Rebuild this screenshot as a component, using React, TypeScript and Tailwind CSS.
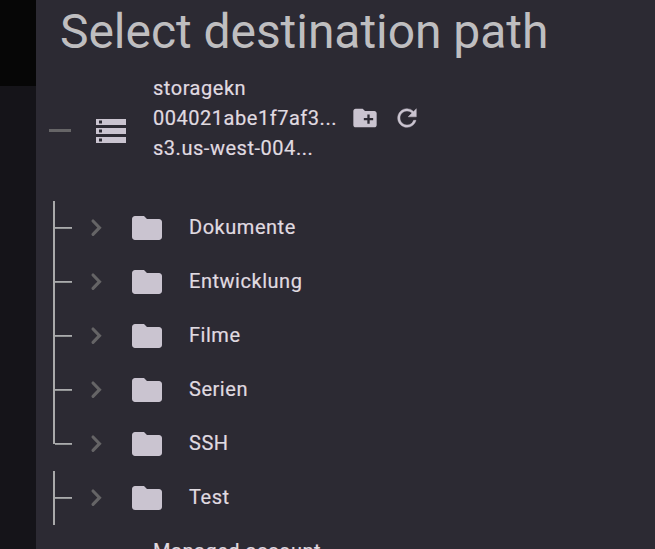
import { MdCreateNewFolder, MdFolder, MdStorage } from 'react-icons/md'

const folders = [
  { name: 'Dokumente', last: false },
  { name: 'Entwicklung', last: false },
  { name: 'Filme', last: false },
  { name: 'Serien', last: false },
  { name: 'SSH', last: true },
  { name: 'Test', last: false },
]

const label = 'text-[20px] leading-[30px] tracking-[0.53px] whitespace-nowrap [-webkit-text-stroke:0.18px_#e0dbe1]'

function Branch({ last }: { last: boolean }) {
  return (
    <div className="flex h-[54px] w-[19px] shrink-0">
      <div className={`w-[2px] bg-[#a9a9aa] ${last ? 'h-[27px]' : 'h-full'}`} />
      <div className="mt-[26px] h-[2px] w-[17px] bg-gradient-to-b from-[#b8b7ba] to-[#858888]" />
    </div>
  )
}

function Chevron() {
  return (
    <svg className="ml-[18px] h-5 w-3 shrink-0" viewBox="0 0 12 20" fill="none">
      <path
        d="M3 3 9.5 9.7 3 16.4"
        stroke="#656466"
        strokeWidth="3.1"
        strokeLinecap="round"
        strokeLinejoin="miter"
      />
    </svg>
  )
}

function Refresh() {
  return (
    <svg className="mt-[31px] ml-[14px] size-7 shrink-0 text-[#cac4d0]" viewBox="0 0 24 24" fill="currentColor">
      <path
        d="M17.65 6.35A7.96 7.96 0 0 0 12 4c-4.42 0-7.99 3.58-7.99 8s3.57 8 7.99 8c3.73 0 6.84-2.55 7.73-6h-2.08A5.99 5.99 0 0 1 12 18c-3.31 0-6-2.69-6-6s2.69-6 6-6c1.66 0 3.14.69 4.22 1.78L13 11h7V4l-2.35 2.35z"
        stroke="currentColor"
        strokeWidth="0.35"
      />
    </svg>
  )
}

export default function App() {
  return (
    <div className="flex h-[549px] w-[655px] overflow-hidden bg-[#2c2a33] font-['Roboto',sans-serif] text-[#e0dbe1]">
      {/* Dimmed page behind the dialog */}
      <div className="w-9 shrink-0 bg-[#151419]">
        <div className="h-[86px] bg-[#060606]" />
      </div>

      <div className="min-w-0 flex-1">
        <h1 className="ml-6 h-[73px] pt-[4px] text-[48px] leading-[56px] tracking-[-0.05px] whitespace-nowrap text-[#bfbec0]">
          Select destination path
        </h1>

        {/* Storage account */}
        <div className="flex h-[90px] items-start">
          <div className="mt-[56px] ml-[13px] h-[3px] w-[22px] shrink-0 bg-[#666567]" />
          <MdStorage className="mt-10 ml-[22px] size-9 shrink-0 text-[#cac4d0]" />
          <div className={`ml-6 w-[184px] ${label}`}>
            <div>storagekn</div>
            <div>004021abe1f7af3...</div>
            <div>s3.us-west-004...</div>
          </div>
          <MdCreateNewFolder className="mt-[31px] ml-[14px] size-7 shrink-0 text-[#cac4d0]" />
          <Refresh />
        </div>

        <div className="mt-[38px] ml-[17px]">
          {folders.map((folder) => (
            <div key={folder.name} className="flex h-[54px] items-center">
              <Branch last={folder.last} />
              <Chevron />
              <MdFolder className="ml-[27px] size-9 shrink-0 text-[#cac4d0]" />
              <div className={`-mt-[2px] ml-6 ${label}`}>{folder.name}</div>
            </div>
          ))}
        </div>

        <div className={`mt-[11px] ml-[117px] ${label}`}>Managed account</div>
      </div>
    </div>
  )
}
